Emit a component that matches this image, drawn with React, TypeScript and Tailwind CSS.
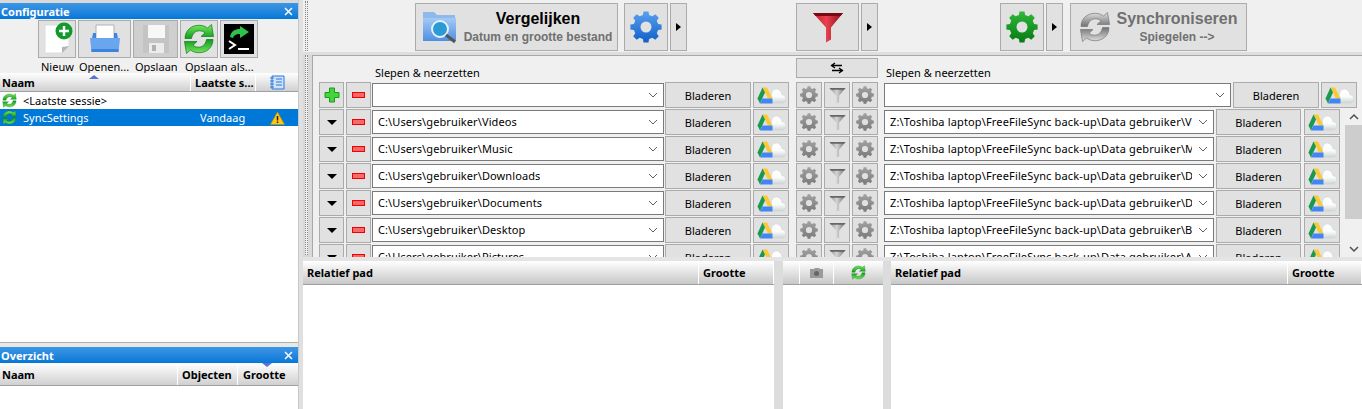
import React from "react";

const gearPath = (cx: number, cy: number, r1: number, r2: number, hole: number, n: number) => {
  let d = "";
  const step = (Math.PI * 2) / n;
  for (let i = 0; i < n; i++) {
    const a = i * step - Math.PI / 2;
    const pts: [number, number][] = [
      [r1, a - step * 0.32],
      [r2, a - step * 0.2],
      [r2, a + step * 0.2],
      [r1, a + step * 0.32],
    ];
    pts.forEach(([r, t], j) => {
      d += `${i === 0 && j === 0 ? "M" : "L"}${(cx + r * Math.cos(t)).toFixed(2)} ${(cy + r * Math.sin(t)).toFixed(2)} `;
    });
  }
  d += "Z ";
  d += `M${cx + hole} ${cy} A${hole} ${hole} 0 1 0 ${cx - hole} ${cy} A${hole} ${hole} 0 1 0 ${cx + hole} ${cy} Z`;
  return d;
};

function Gear({ size = 32, c1 = "#5aa0f0", c2 = "#0f5fc8", id = "g" }: { size?: number; c1?: string; c2?: string; id?: string }) {
  return (
    <svg width={size} height={size} viewBox="0 0 32 32">
      <defs>
        <linearGradient id={id} x1="0" y1="0" x2="0" y2="1">
          <stop offset="0" stopColor={c1} />
          <stop offset="1" stopColor={c2} />
        </linearGradient>
      </defs>
      <path d={gearPath(16, 16, 12.5, 15.8, 5.5, 8)} fill={`url(#${id})`} fillRule="evenodd" />
    </svg>
  );
}

function SyncIcon({ size = 24, c1 = "#7be85f", c2 = "#0c9a1e", edge = "#0b7a1a", id = "s" }: { size?: number; c1?: string; c2?: string; edge?: string; id?: string }) {
  const d = "M2 15.500C2 7 9 1.800 17 2.300C20 2.500 22.500 3.500 24.500 5L28.500 1.500L30.500 13.500H18L22 9.800C20.500 8.500 18.500 7.800 16.500 7.800C12.500 7.800 9.500 10.500 8.500 15.500Z";
  return (
    <svg width={size} height={size} viewBox="0 0 32 32">
      <defs>
        <linearGradient id={id} x1="0" y1="0" x2="0" y2="1">
          <stop offset="0" stopColor={c1} />
          <stop offset="1" stopColor={c2} />
        </linearGradient>
      </defs>
      <path d={d} fill={`url(#${id})`} stroke={edge} strokeWidth="0.7" />
      <path d={d} fill={`url(#${id})`} stroke={edge} strokeWidth="0.7" transform="rotate(180 16 16)" />
    </svg>
  );
}

function Funnel({ size = 32, gray = false, id = "f" }: { size?: number; gray?: boolean; id?: string }) {
  return (
    <svg width={size} height={size} viewBox="0 0 32 32">
      <defs>
        <linearGradient id={id} x1="0" y1="0" x2="1" y2="0">
          <stop offset="0" stopColor={gray ? "#8a8a8a" : "#c8202c"} />
          <stop offset="0.45" stopColor={gray ? "#d4d4d4" : "#e84050"} />
          <stop offset="1" stopColor={gray ? "#6f6f6f" : "#8a0c14"} />
        </linearGradient>
      </defs>
      <path d="M1 2H31L19 16.500V28.500L14 31.500V16.500Z" fill={`url(#${id})`} />
      <path d="M1 2H31L28.500 5H3.500Z" fill={gray ? "#666" : "#7a0a12"} />
    </svg>
  );
}

let cloudId = 0;
function Drive() {
  const id = `cl${++cloudId}`;
  return (
    <svg width="29" height="17" viewBox="0 0 29 17">
      <defs>
        <linearGradient id={id} x1="0" y1="0" x2="0" y2="1">
          <stop offset="0" stopColor="#ffffff" />
          <stop offset="0.55" stopColor="#fafbfb" />
          <stop offset="1" stopColor="#ccd5d5" />
        </linearGradient>
      </defs>
      <path d="M13 16H24.500C27.500 16 28.800 14 28.800 11.500C28.800 9 27 7.800 25 7.800C24.500 4 21.500 1.500 18.500 2C16 2.400 14.500 5 14.500 7Z" fill={`url(#${id})`} stroke="#cdd3d3" strokeWidth="0.6" />
      <path d="M5.500 0.500H10L15.500 11.500H11Z" fill="#fcc934" />
      <path d="M5.500 0.500L8 5.500L3 16.500L0.500 11.500Z" fill="#1a9a50" />
      <path d="M5.500 11.500H15.500V16.500H3Z" fill="#4285f4" />
    </svg>
  );
}

const Btn = ({ className = "", children }: { className?: string; children?: React.ReactNode }) => (
  <div className={`flex shrink-0 items-center justify-center border border-[#ababab] bg-[#e1e1e1] ${className}`}>{children}</div>
);

const Minus = () => <div className="h-[6px] w-[13px] border border-[#f00000] bg-[#f86a6a]" />;

const Down = () => <div className="h-0 w-0 border-x-[5px] border-t-[5px] border-x-transparent border-t-black" />;

const Chevron = () => (
  <svg width="10" height="6" viewBox="0 0 10 6" className="shrink-0">
    <path d="M1 1L5 5L9 1" fill="none" stroke="#606060" strokeWidth="1" />
  </svg>
);

const PathInput = ({ value, className, textClass = "" }: { value: string; className: string; textClass?: string }) => (
  <div className={`flex h-[24px] shrink-0 items-center justify-between gap-[6px] overflow-hidden border border-[#7a7a7a] bg-white pl-[5px] pr-[5px] ${className}`}>
    <span className={`overflow-hidden whitespace-nowrap pb-[2px] ${textClass}`}>{value}</span>
    <Chevron />
  </div>
);

const Bladeren = ({ w }: { w: string }) => <Btn className={`h-[26px] ${w}`}>Bladeren</Btn>;

const CloudBtn = () => (
  <Btn className="h-[26px] w-[36px]">
    <Drive />
  </Btn>
);

let uid = 0;
const CenterBtns = () => {
  const k = ++uid;
  return (
    <div className="ml-[7px] mr-[6px] flex shrink-0 gap-[2px]">
      <Btn className="h-[26px] w-[26px]"><Gear size={18} c1="#a2a2a2" c2="#7a7a7a" id={`cg1${k}`} /></Btn>
      <Btn className="h-[26px] w-[26px]"><Funnel size={17} gray id={`cf${k}`} /></Btn>
      <Btn className="h-[26px] w-[26px]"><Gear size={18} c1="#a2a2a2" c2="#7a7a7a" id={`cg2${k}`} /></Btn>
    </div>
  );
};

const pairs = [
  ["C:\\Users\\gebruiker\\Videos", "Z:\\Toshiba laptop\\FreeFileSync back-up\\Data gebruiker\\V"],
  ["C:\\Users\\gebruiker\\Music", "Z:\\Toshiba laptop\\FreeFileSync back-up\\Data gebruiker\\M"],
  ["C:\\Users\\gebruiker\\Downloads", "Z:\\Toshiba laptop\\FreeFileSync back-up\\Data gebruiker\\D"],
  ["C:\\Users\\gebruiker\\Documents", "Z:\\Toshiba laptop\\FreeFileSync back-up\\Data gebruiker\\D"],
  ["C:\\Users\\gebruiker\\Desktop", "Z:\\Toshiba laptop\\FreeFileSync back-up\\Data gebruiker\\B"],
  ["C:\\Users\\gebruiker\\Pictures", "Z:\\Toshiba laptop\\FreeFileSync back-up\\Data gebruiker\\A"],
];

const Arrow = ({ className = "" }: { className?: string }) => (
  <Btn className={`h-[48px] w-[17px] ${className}`}>
    <div className="h-0 w-0 border-y-[4px] border-l-[5px] border-y-transparent border-l-black" />
  </Btn>
);

const TitleBar = ({ title }: { title: string }) => (
  <div className="flex h-[16px] shrink-0 items-center justify-between bg-gradient-to-b from-[#3b96e4] to-[#0078d7] pl-[1px] pr-[5px] font-bold leading-none text-white">
    <span>{title}</span>
    <svg width="9" height="9" viewBox="0 0 9 9"><path d="M1 1L8 8M8 1L1 8" stroke="#fff" strokeWidth="1.500" /></svg>
  </div>
);

const Head = ({ className = "", children }: { className?: string; children?: React.ReactNode }) => (
  <div className={`flex h-full items-center whitespace-nowrap border-r border-white px-[4px] ${className}`}>{children}</div>
);

const ConfigTool = ({ children, dim = false, w = "w-[38px]" }: { children: React.ReactNode; dim?: boolean; w?: string }) => (
  <div className={`flex h-[38px] items-center justify-center border border-[#ababab] ${w} ${dim ? "bg-[#cfcfcf]" : "bg-[#e1e1e1]"}`}>{children}</div>
);

const Grip = ({ className = "" }: { className?: string }) => (
  <div className={`w-[3px] shrink-0 border-x border-dotted border-[#8a8a8a] bg-[#f0f0f0] ${className}`} />
);

export default function App() {
  uid = 0;
  cloudId = 0;
  return (
    <div className="flex h-[409px] w-[1362px] overflow-hidden bg-[#d9d9d9] text-[11px] leading-[15px] text-black [font-family:'Noto_Sans','Liberation_Sans',sans-serif]">
      {/* left */}
      <div className="flex w-[298px] shrink-0 flex-col">
        <div className="h-[3px] shrink-0 bg-[#d9d9d9]" />
        <TitleBar title="Configuratie" />
        <div className="flex h-[54px] shrink-0 flex-col bg-[#f0f0f0]">
          <div className="flex gap-[2px] pl-[38px] pt-[1px]">
            <ConfigTool>
              <svg width="32" height="34" viewBox="0 0 32 34">
                <path d="M4 3H21V12H28V24L21 31H4Z" fill="#fff" stroke="#dcdcdc" />
                <path d="M28 24L21 25L21 31Z" fill="#b5b5b5" />
                <circle cx="23" cy="9" r="8.500" fill="#0f9a2a" />
                <path d="M23 4V14M18 9H28" stroke="#fff" strokeWidth="2.500" />
              </svg>
            </ConfigTool>
            <ConfigTool w="w-[53px]">
              <svg width="32" height="32" viewBox="0 0 32 32">
                <path d="M7 2H25V17H7Z" fill="#fff" stroke="#b0b0b0" />
                <path d="M4 10H7V16H25V10H28L29 16H3Z" fill="#3f86de" />
                <path d="M1 15H31L29.500 29H2.500Z" fill="#6aa6ee" />
                <path d="M2.500 26H29.500V29H2.500Z" fill="#3c83dc" />
              </svg>
            </ConfigTool>
            <ConfigTool dim w="w-[45px]">
              <svg width="32" height="32" viewBox="0 0 32 32">
                <path d="M3 2H29V30H3Z" fill="#c4c4c4" />
                <path d="M8 2H25V15H8Z" fill="#f7f7f7" />
                <path d="M9 20H24V30H9Z" fill="#ececec" />
                <path d="M12 22H16V28H12Z" fill="#b0b0b0" />
              </svg>
            </ConfigTool>
            <ConfigTool><SyncIcon size={32} id="cfgs" /></ConfigTool>
            <ConfigTool>
              <div className="relative h-[30px] w-[30px] bg-black">
                <svg width="30" height="30" viewBox="0 0 30 30">
                  <path d="M6 13C7 7 11 5 16 5V2L25 8L16 14V10C12 10 10 11 9 14Z" fill="#2fc24a" />
                  <path d="M5 17L11 21L5 25" fill="none" stroke="#fff" strokeWidth="2" />
                  <path d="M14 25H25" stroke="#fff" strokeWidth="2" />
                </svg>
              </div>
            </ConfigTool>
          </div>
          <div className="flex pl-[41px] pt-[1px] whitespace-nowrap">
            <span className="w-[38px]">Nieuw</span>
            <span className="w-[56px]">Openen...</span>
            <span className="w-[50px]">Opslaan</span>
            <span>Opslaan als...</span>
          </div>
        </div>
        <div className="relative flex h-[19px] shrink-0 items-center border-b border-[#a0a0a0] bg-gradient-to-b from-[#ffffff] to-[#d0d0d0] font-bold">
          <Head className="w-[191px] !px-[2px]">Naam</Head>
          <Head className="w-[65px]">Laatste s...</Head>
          <div className="flex flex-1 justify-center">
            <svg width="16" height="15" viewBox="0 0 16 15">
              <path d="M3 1H15V14H3Z" fill="#cfe3fb" stroke="#2a78d8" />
              <path d="M1 3H5M1 6H5M1 9H5M1 12H5M7 4H13M7 7H13M7 10H13" stroke="#2a78d8" />
            </svg>
          </div>
          <div className="absolute left-[89px] top-[2px] h-0 w-0 border-x-[5px] border-b-[4px] border-x-transparent border-b-[#5c70d8]" />
        </div>
        <div className="h-[250px] shrink-0 bg-white">
          <div className="flex h-[17px] items-center pl-[2px]">
            <SyncIcon size={15} id="ls1" />
            <span className="ml-[6px]">&lt;Laatste sessie&gt;</span>
          </div>
          <div className="flex h-[17px] items-center bg-[#0078d7] pl-[2px] text-white">
            <SyncIcon size={15} id="ls2" />
            <span className="ml-[6px] w-[177px]">SyncSettings</span>
            <span className="w-[70px]">Vandaag</span>
            <svg width="15" height="14" viewBox="0 0 15 14">
              <path d="M7.500 1L14.500 13.500H0.500Z" fill="#ffc61a" stroke="#c08a00" strokeWidth="0.700" />
              <path d="M7.500 5V9.500M7.500 10.500V12" stroke="#222" strokeWidth="1.500" />
            </svg>
          </div>
        </div>
        <div className="h-[5px] shrink-0 border-t border-[#b0b0b0] bg-[#e8e8e8]" />
        <TitleBar title="Overzicht" />
        <div className="flex h-[23px] shrink-0 items-center border-b border-[#a0a0a0] bg-gradient-to-b from-[#ffffff] to-[#d0d0d0] font-bold">
          <Head className="w-[178px] !px-[2px]">Naam</Head>
          <Head className="w-[60px]">Objecten</Head>
          <div className="relative flex h-full flex-1 items-center px-[5px]">
            Grootte
            <div className="absolute left-[24px] top-0 h-0 w-0 border-x-[5px] border-t-[4px] border-x-transparent border-t-[#5c70d8]" />
          </div>
        </div>
        <div className="flex-1 bg-white" />
      </div>

      {/* sash */}
      <div className="w-[5px] shrink-0 border-l border-[#c8c8c8] bg-[#e0e0e0]" />

      {/* right */}
      <div className="flex min-w-0 flex-1 flex-col">
        {/* toolbar */}
        <div className="flex h-[52px] shrink-0 bg-[#f0f0f0]">
          <Grip className="ml-[2px] mt-[1px] h-[50px]" />
          <div className="flex items-start pl-[107px] pt-[3px]">
            <Btn className="h-[48px] w-[203px] !justify-start pl-[6px]">
              <svg width="38" height="36" viewBox="0 0 38 36" className="shrink-0">
                <defs>
                  <linearGradient id="fold" x1="0" y1="0" x2="0" y2="1">
                    <stop offset="0" stopColor="#a3caf5" />
                    <stop offset="1" stopColor="#4f8fe0" />
                  </linearGradient>
                </defs>
                <path d="M1 3H12L15 6H33V12H1Z" fill="#8db9ec" />
                <path d="M1 9H34V32H1Z" fill="url(#fold)" />
                <circle cx="18" cy="20" r="8" fill="#2b9bd6" stroke="#e4f0fb" strokeWidth="2" />
                <path d="M24 26L33 33" stroke="#555" strokeWidth="3" />
              </svg>
              <div className="ml-[3px] flex w-[150px] flex-col items-center whitespace-nowrap text-[12px] leading-none [font-family:'Liberation_Sans',sans-serif]">
                <span className="text-[16px] font-bold">Vergelijken</span>
                <span className="mt-[4px] font-bold text-[#707070]">Datum en grootte bestand</span>
              </div>
            </Btn>
            <Btn className="ml-[6px] h-[48px] w-[44px]"><Gear size={32} id="tg1" /></Btn>
            <Arrow className="ml-[2px]" />
            <Btn className="ml-[109px] h-[48px] w-[63px]"><Funnel size={32} id="tf" /></Btn>
            <Arrow className="ml-[2px]" />
            <Btn className="ml-[122px] h-[48px] w-[44px]"><Gear size={32} c1="#2fb83a" c2="#067a12" id="tg2" /></Btn>
            <Arrow className="ml-[2px]" />
            <Btn className="ml-[7px] h-[48px] w-[177px] !justify-start pl-[8px]">
              <SyncIcon size={32} c1="#e0e0e0" c2="#707070" edge="#777" id="ts" />
              <div className="ml-[2px] flex w-[128px] flex-col items-center whitespace-nowrap text-[12px] leading-none text-[#707070] [font-family:'Liberation_Sans',sans-serif]">
                <span className="text-[16px] font-bold">Synchroniseren</span>
                <span className="mt-[4px] font-bold">Spiegelen --&gt;</span>
              </div>
            </Btn>
          </div>
        </div>
        <div className="h-[3px] shrink-0 bg-[#dedede]" />

        {/* folder pairs */}
        <div className="flex h-[202px] shrink-0">
          <Grip className="ml-[2px] mr-[4px] h-[200px]" />
          <div className="flex min-w-0 flex-1 flex-col overflow-hidden border-l border-t border-[#a8a8a8] bg-[#f0f0f0]">
            <div className="flex h-[26px] shrink-0 pt-[2px]">
              <span className="ml-[62px] mt-[7px] w-[421px]">Slepen &amp; neerzetten</span>
              <Btn className="h-[20px] w-[82px] leading-none">
                <svg width="14" height="12" viewBox="0 0 14 12">
                  <path d="M1 3.500H12M5 1L1.500 3.500L5 6M13 8.500H2M9 6L12.500 8.500L9 11" fill="none" stroke="#000" strokeWidth="1.300" />
                </svg>
              </Btn>
              <span className="ml-[8px] mt-[7px]">Slepen &amp; neerzetten</span>
            </div>
            <div className="flex h-[27px] shrink-0 items-start pl-[6px]">
              <Btn className="h-[26px] w-[25px]">
                <svg width="16" height="16" viewBox="0 0 16 16">
                  <path d="M5.500 1H10.500V5.500H15V10.500H10.500V15H5.500V10.500H1V5.500H5.500Z" fill="#43d63c" stroke="#1c9a1c" />
                </svg>
              </Btn>
              <Btn className="ml-[2px] h-[26px] w-[25px]"><Minus /></Btn>
              <div className="ml-[1px] pt-[1px]"><PathInput value="" className="w-[292px]" /></div>
              <div className="ml-[1px]"><Bladeren w="w-[86px]" /></div>
              <div className="ml-[2px]"><CloudBtn /></div>
              <CenterBtns />
              <div className="pt-[1px]"><PathInput value="" className="w-[347px]" /></div>
              <div className="ml-[2px]"><Bladeren w="w-[86px]" /></div>
              <div className="ml-[2px]"><CloudBtn /></div>
            </div>
            <div className="flex min-h-0 flex-1">
              <div className="min-w-0 flex-1 overflow-hidden">
                {pairs.map(([l, r]) => (
                  <div key={l} className="flex h-[27px] items-start pl-[6px]">
                    <Btn className="h-[26px] w-[25px]"><Down /></Btn>
                    <Btn className="ml-[2px] h-[26px] w-[25px]"><Minus /></Btn>
                    <div className="ml-[1px] pt-[1px]"><PathInput value={l} className="w-[292px]" textClass="tracking-[0.1px]" /></div>
                    <div className="ml-[1px]"><Bladeren w="w-[86px]" /></div>
                    <div className="ml-[2px]"><CloudBtn /></div>
                    <CenterBtns />
                    <div className="pt-[1px]"><PathInput value={r} className="w-[330px]" textClass="tracking-[0.15px]" /></div>
                    <div className="ml-[2px]"><Bladeren w="w-[85px]" /></div>
                    <div className="ml-[3px]"><CloudBtn /></div>
                  </div>
                ))}
              </div>
              <div className="flex w-[17px] shrink-0 flex-col items-center">
                <svg width="10" height="16" viewBox="0 0 10 16"><path d="M1 10L5 6L9 10" fill="none" stroke="#505050" strokeWidth="1.500" /></svg>
                <div className="w-full flex-1 pb-[18px]"><div className="h-[94px] w-full bg-[#cdcdcd]" /></div>
                <svg width="10" height="16" viewBox="0 0 10 16"><path d="M1 6L5 10L9 6" fill="none" stroke="#505050" strokeWidth="1.500" /></svg>
              </div>
            </div>
          </div>
        </div>

        {/* grids */}
        <div className="flex min-h-0 flex-1 border-t-[4px] border-[#e4e4e4]">
          <div className="flex w-[471px] shrink-0 flex-col bg-white">
            <div className="flex h-[24px] items-center border-b border-[#a0a0a0] bg-gradient-to-b from-[#ffffff] to-[#c8c8c8] font-bold">
              <Head className="w-[396px]">Relatief pad</Head>
              <Head className="flex-1">Grootte</Head>
            </div>
          </div>
          <div className="w-[9px] shrink-0 bg-[#dcdcdc]" />
          <div className="flex w-[100px] shrink-0 flex-col bg-white">
            <div className="flex h-[24px] items-center border-b border-[#a0a0a0] bg-gradient-to-b from-[#ffffff] to-[#c8c8c8]">
              <Head className="w-[17px]" />
              <Head className="w-[34px] justify-center">
                <svg width="15" height="12" viewBox="0 0 15 12">
                  <path d="M1 2H5L6 1H10L11 2H14V11H1Z" fill="#9a9a9a" />
                  <circle cx="7.500" cy="6.500" r="2.500" fill="#666" />
                </svg>
              </Head>
              <div className="flex flex-1 justify-center"><SyncIcon size={15} id="ms" /></div>
            </div>
          </div>
          <div className="w-[8px] shrink-0 bg-[#dcdcdc]" />
          <div className="flex min-w-0 flex-1 flex-col bg-white">
            <div className="flex h-[24px] items-center border-b border-[#a0a0a0] bg-gradient-to-b from-[#ffffff] to-[#c8c8c8] font-bold">
              <Head className="w-[397px]">Relatief pad</Head>
              <Head className="flex-1">Grootte</Head>
            </div>
          </div>
        </div>
      </div>
    </div>
  );
}
